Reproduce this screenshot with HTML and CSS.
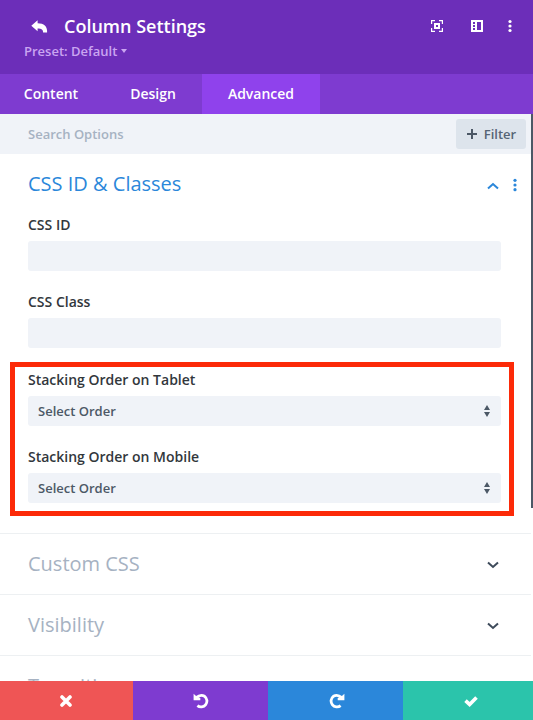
FILE: index.html
```html
<!DOCTYPE html>
<html lang="en">
<head>
<meta charset="utf-8">
<title>Column Settings</title>
<link rel="stylesheet" href="styles.css">
</head>
<body>
<div class="modal">
  <header class="header">
    <div class="title-row">
      <svg class="back" width="18" height="14" viewBox="0 0 18 14"><path d="M6.6 0.3v2.9c6.2 0 10 2.8 9.5 9.4h-4c0-3-1.6-4-5.5-4v2.7L0.3 5.8z" fill="#fff"/></svg>
      <h1>Column Settings</h1>
      <div class="tools">
        <svg width="12" height="12" viewBox="0 0 12 12"><path d="M.6 4V.6H4M8 .6h3.4V4M11.4 8v3.4H8M4 11.4H.6V8" fill="none" stroke="#fff" stroke-width="1.2"/><path d="M4 4h4v4H4z" fill="none" stroke="#fff" stroke-width="2"/></svg>
        <svg width="12" height="12" viewBox="0 0 12 12"><path fill="#fff" fill-rule="evenodd" d="M0 0h12v12H0zM6 2v8h4V2zM2 2v2h2V2zM2 5v2h2V5zM2 8v2h2V8z"/></svg>
        <svg class="dots" width="4" height="14" viewBox="0 0 4 14"><g fill="#fff"><circle cx="2" cy="2.5" r="1.6"/><circle cx="2" cy="7" r="1.6"/><circle cx="2" cy="11.5" r="1.6"/></g></svg>
      </div>
    </div>
    <div class="preset"><span>Preset: Default</span><svg width="6" height="4" viewBox="0 0 6 4"><path d="M0 0h6L3 4z" fill="currentColor"/></svg></div>
  </header>
  <nav class="tabs">
    <a class="tab tab-content">Content</a>
    <a class="tab tab-design">Design</a>
    <a class="tab tab-advanced">Advanced</a>
  </nav>
  <main class="scroll">
    <div class="search">
      <span>Search Options</span>
      <button class="filter"><svg width="10" height="10" viewBox="0 0 10 10"><path d="M5 0v10M0 5h10" stroke="#4c5866" stroke-width="2"/></svg>Filter</button>
    </div>
    <section class="open">
      <div class="section-head">
        <h2>CSS ID &amp; Classes</h2>
        <svg class="up" width="12" height="8" viewBox="0 0 12 8"><path d="M1 6.6 6 2l5 4.6" fill="none" stroke="#2b87da" stroke-width="2"/></svg>
        <svg width="4" height="14" viewBox="0 0 4 14"><g fill="#2b87da"><circle cx="2" cy="2.3" r="1.6"/><circle cx="2" cy="7" r="1.6"/><circle cx="2" cy="11.7" r="1.6"/></g></svg>
      </div>
      <div class="field"><label>CSS ID</label><div class="input"></div></div>
      <div class="field"><label>CSS Class</label><div class="input"></div></div>
      <div class="highlight">
        <div class="field"><label>Stacking Order on Tablet</label><div class="input"><span>Select Order</span><svg width="6" height="12" viewBox="0 0 6 12"><path d="M0 5l3-5 3 5zM0 7h6l-3 5z" fill="#4c5866"/></svg></div></div>
        <div class="field"><label>Stacking Order on Mobile</label><div class="input"><span>Select Order</span><svg width="6" height="12" viewBox="0 0 6 12"><path d="M0 5l3-5 3 5zM0 7h6l-3 5z" fill="#4c5866"/></svg></div></div>
      </div>
    </section>
    <section class="closed"><h2>Custom CSS</h2><svg width="12" height="8" viewBox="0 0 12 8"><path d="M1 1.4 6 6l5-4.6" fill="none" stroke="#3e4b5b" stroke-width="2"/></svg></section>
    <section class="closed"><h2>Visibility</h2><svg width="12" height="8" viewBox="0 0 12 8"><path d="M1 1.4 6 6l5-4.6" fill="none" stroke="#3e4b5b" stroke-width="2"/></svg></section>
    <section class="closed"><h2>Transitions</h2></section>
    <div class="scrollbar"></div>
  </main>
  <footer class="actions">
    <button class="discard"><svg width="12" height="12" viewBox="0 0 12 12"><path d="M2 2l8 8M10 2l-8 8" stroke="#fff" stroke-width="3.6" stroke-linecap="round"/></svg></button>
    <button class="undo"><svg width="16" height="16" viewBox="0 0 16 16"><path d="M3.2 4.6C6 2.2 9.2 1.8 11.6 3.3A5.4 5.4 0 1 1 4.4 12.7" fill="none" stroke="#fff" stroke-width="2.8"/><path d="M.6.8 2.8 2.7 7.3 5V7.2H.6z" fill="#fff"/></svg></button>
    <button class="redo"><svg width="16" height="16" viewBox="0 0 16 16"><g transform="matrix(-1 0 0 1 16 0)"><path d="M3.2 4.6C6 2.2 9.2 1.8 11.6 3.3A5.4 5.4 0 1 1 4.4 12.7" fill="none" stroke="#fff" stroke-width="2.8"/><path d="M.6.8 2.8 2.7 7.3 5V7.2H.6z" fill="#fff"/></g></svg></button>
    <button class="save"><svg width="14" height="12" viewBox="0 0 14 12"><path d="M1.5 5.6 5.6 9.4 12.5 2.4" fill="none" stroke="#fff" stroke-width="3.6"/></svg></button>
  </footer>
</div>
</body>
</html>
```
FILE: styles.css
```css
* { box-sizing: border-box; }
body { margin: 0; font-family: "Open Sans", sans-serif; font-size: 13px; font-weight: 600; }
h1, h2 { margin: 0; }
svg { display: block; flex: none; }
button { border: 0; padding: 0; font: inherit; }
.modal { width: 533px; height: 720px; display: flex; flex-direction: column; overflow: hidden; background: #fff; }
.header { height: 74px; flex: none; background: #6c2eb9; color: #fff; padding: 14px 21px 0 24px; }
.title-row { display: flex; align-items: center; height: 25px; padding-left: 7px; }
.back { margin-right: 15px; }
h1 { font-size: 18px; line-height: 25px; font-weight: 600; }
.tools { margin: -1px 0 0 auto; display: flex; align-items: center; gap: 28px; }
.dots { margin-left: -3px; }
.preset { display: flex; align-items: center; gap: 4px; line-height: 18px; margin-top: 3px; color: #caa5f1; height: 18px; }
.tabs { height: 40px; flex: none; display: flex; background: #7e3bd0; color: #fff; font-size: 14px; line-height: 40px; }
.tab { text-align: center; }
.tab-content { width: 102px; }
.tab-design { width: 100px; padding-left: 2px; }
.tab-advanced { width: 118px; background: #8f42ec; }
.scroll { flex: 1; min-height: 0; position: relative; overflow: hidden; padding-right: 2px; }
.search { height: 40px; display: flex; align-items: center; justify-content: space-between; background: #f0f3f8; color: #a6b2c2; padding: 0 5px 0 28px; }
.filter { width: 70px; height: 30px; border-radius: 3px; background: #dde4ec; color: #566475; display: flex; align-items: center; justify-content: center; gap: 7px; padding-left: 1px; }
.open { height: 379px; padding-left: 28px; }
.section-head { display: flex; align-items: center; height: 60px; color: #2b87da; padding-right: 14px; }
h2 { font-size: 20px; line-height: 28px; font-weight: 400; }
.up { margin: 3px 14px 0 auto; }
.section-head svg:last-child { margin-top: 2px; }
.field { width: 473px; height: 77px; color: #32373c; }
.field label { display: block; height: 27px; line-height: 21px; font-size: 14px; }
.input { height: 30px; border-radius: 3px; background: #f0f3f8; display: flex; align-items: center; justify-content: space-between; padding: 0 11px 0 10px; color: #4c5866; }
.highlight { width: 504px; height: 154px; margin-left: -18px; margin-top: -6px; border: 5px solid #fc2a08; padding: 2px 0 0 13px; }
.closed { height: 61px; border-top: 1px solid #edf0f2; display: flex; align-items: center; justify-content: space-between; padding: 0 32px 0 28px; color: #a6b2c2; }
.closed svg { margin-top: 2px; }
.scrollbar { position: absolute; top: 0; right: 0; width: 2px; height: 394px; background: #4c5866; }
.actions { height: 39px; flex: none; display: grid; grid-template-columns: 133px 135px 135px 130px; }
.actions button { display: flex; align-items: center; justify-content: center; }
.discard { background: #ef5555; }
.actions .discard { padding-right: 2px; }
.undo { background: #7e3bd0; }
.redo { background: #2b87da; }
.actions .redo { padding-left: 2px; }
.save { background: #2bc4ab; }
.actions .save { padding-left: 6px; }
```
